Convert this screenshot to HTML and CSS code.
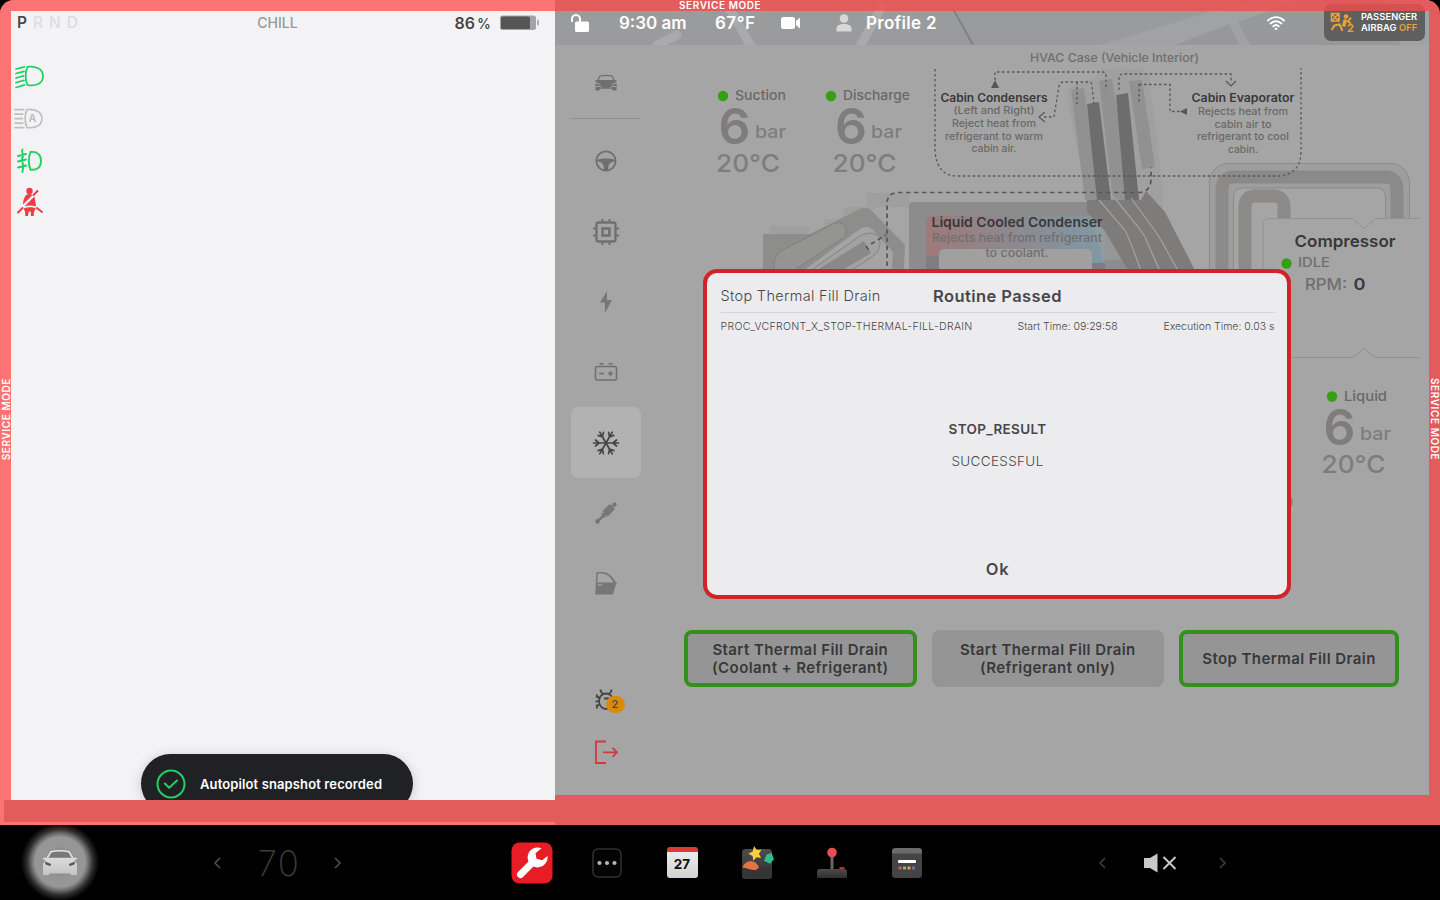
FILE: index.html
```
<!DOCTYPE html>
<html lang="en">
<head>
    <meta charset="UTF-8">
    <meta name="viewport" content="width=device-width, initial-scale=1.0">
    <title>Service Mode</title>
    <link rel="stylesheet" href="styles.css">
</head>
<body>
    <div class="screen">
        <!-- driver side -->
        <section class="drive">
            <div class="drive-panel">
                <header class="drive-top">
                    <div class="gears"><span class="on">P</span><span>R</span><span>N</span><span>D</span></div>
                    <div class="mode">CHILL</div>
                    <div class="charge">
                        <span class="charge-num">86<small>%</small></span>
                        <svg width="42" height="18" viewBox="0 0 42 18">
                            <rect x="1" y="1.500" width="36" height="14.500" rx="2.500" fill="#a3a3a5"/>
                            <rect x="2" y="2.500" width="29" height="12.500" rx="1.500" fill="#565657"/>
                            <rect x="38" y="5.500" width="2" height="6" rx="1" fill="#b0b0b2"/>
                        </svg>
                    </div>
                </header>
                <div class="lights">
                    <svg width="34" height="42" viewBox="0 0 34 42" fill="none" stroke="#1fd163" stroke-width="1.800" stroke-linecap="round">
                        <path d="M14.500 11.800c8-1 15.500 1.700 15.500 9.500S22.500 31.200 14.500 30.200c-2.500-5-2.500-13.500 0-18.400z"/>
                        <path d="M3 14l8.500-2.200M3 18.500l8-2.200M3 23l7.500-2.200M3 27.500l8-2.200M3 32.500l8.500-2.600"/>
                    </svg>
                    <svg width="34" height="42" viewBox="0 0 34 42" fill="none" stroke="#bfbfc1" stroke-width="1.700" stroke-linecap="round">
                        <path d="M14 12.500c7-1 15 1.700 15 9.200S21 31.300 14 30.600c-2.500-5-2.500-13.100 0-18.100z"/>
                        <path d="M2 12.600h8.800M2 17.100h7.800M2 21.600h7.500M2 26.100h7.800M2 30.600h8.800"/>
                        <text x="15.500" y="25.300" class="auto-a">A</text>
                    </svg>
                    <svg width="34" height="42" viewBox="0 0 34 42" fill="none" stroke="#1fd163" stroke-width="1.900" stroke-linecap="round">
                        <path d="M17.500 13c7-.8 10.500 2.800 10.500 9s-4 9.300-10.500 8.700c-2-5-2-12.500 0-17.700z"/>
                        <path d="M5 17l8-2M5 22.500l8-2M5 28.500l8-2M9.500 10.500c-2 3 1.500 4 .5 7s-2.500 3-.5 6 0 6 0 9.500"/>
                    </svg>
                    <svg width="34" height="42" viewBox="0 0 34 42" fill="#ee3c43">
                        <circle cx="16.500" cy="10" r="3.200"/>
                        <path d="M13 14.200c2-1.600 5-1.200 6.500-.200L10 23.500c0-3.500.8-7 3-9.300z"/>
                        <path d="M21.500 15.500l1.600 10c-3.500-1.200-8-1.200-11.500-.2z"/>
                        <path d="M10.500 27.500c4-1.600 9-1.600 12.500 0l-2 3-.3 4.500H18l-.3-4.500h-2l-.8 4.500h-2.600l-.3-4.500z"/>
                        <path d="M24.500 10l-4 4M24 27l5 4M9.500 27l-4.500 4.500" stroke="#ee3c43" stroke-width="2" stroke-linecap="round"/>
                    </svg>
                </div>
                <div class="toast">
                    <svg width="30" height="30" viewBox="0 0 30 30" fill="none" stroke="#23cf66" stroke-width="2" stroke-linecap="round" stroke-linejoin="round">
                        <circle cx="15" cy="15" r="13.500"/>
                        <path d="M8.800 14.500l4.400 4.300 7.800-7.300"/>
                    </svg>
                    <span>Autopilot snapshot recorded</span>
                </div>
            </div>
            <div class="drive-foot"></div>
        </section>

        <!-- center display -->
        <section class="service">
            <header class="status">
                <svg class="map" width="874" height="45" viewBox="555 0 874 45">
                    <path fill="#a1a2a3" d="M1100 45L1250 0h190v45z"/>
                    <path fill="#97989a" d="M1175 45l54-21 10 21zM1238 22l60-22h90l12 45h-150z"/>
                    <path d="M657 45l20-10M728 6l24 42M882 6l-24 44" stroke="#a8aaab" stroke-width="9" stroke-linecap="round"/>
                    <path d="M952 7l21 38" stroke="#818284" stroke-width="2"/>
                </svg>
                <svg class="lock" width="20" height="20" viewBox="0 0 20 20">
                    <path d="M2 9V6a4 4 0 0 1 8 0v5" fill="none" stroke="#fff" stroke-width="2"/>
                    <rect x="5" y="8.500" width="14" height="10.500" rx="1.500" fill="#fff"/>
                </svg>
                <span class="time">9:30 am</span>
                <span class="temp">67°F</span>
                <svg class="cam" width="22" height="14" viewBox="0 0 22 14" fill="#fff"><rect x="1" y="1" width="14" height="12" rx="2.500"/><path d="M16 5l4-3.500v11L16 9z"/></svg>
                <svg class="person" width="16" height="18" viewBox="0 0 16 18" fill="#d8d8d9"><circle cx="8" cy="4.500" r="4.300"/><path d="M.5 17.500v-3c0-3 3-4.500 7.500-4.500s7.500 1.500 7.500 4.500v3z"/></svg>
                <span class="profile">Profile 2</span>
                <svg class="wifi" width="20" height="16" viewBox="0 0 20 16" fill="none" stroke="#fff" stroke-width="1.800" stroke-linecap="round">
                    <path d="M2 5.500c4.500-4.500 11.500-4.500 16 0M4.600 8.500c3-3 7.800-3 10.800 0M7.200 11.300c1.600-1.500 4-1.500 5.600 0"/><circle cx="10" cy="13.800" r=".9" fill="#fff" stroke-width="1"/>
                </svg>
                <div class="airbag">
                    <svg width="25" height="24" viewBox="0 0 25 24" fill="none" stroke="#f0a136" stroke-width="1.500">
                        <path d="M1.500 2.500h7.500v7.500H1.500zM1.500 2.500L9 10M9 2.500L1.500 10"/>
                        <circle cx="16" cy="5.500" r="2.300" fill="#f0a136" stroke="none"/>
                        <path d="M15.500 8.500l-2 7" stroke-width="3.500"/>
                        <path d="M21 6.500l-3 4 3 2M1.500 19l3-4.500 5-1.200 3 6.500" stroke-width="2"/>
                        <text x="17" y="21" class="seat-no">2</text>
                    </svg>
                    <p>PASSENGER<br>AIRBAG <b>OFF</b></p>
                </div>
            </header>

            <div class="work">
                <nav class="side">
                    <a class="side-item"><svg width="24" height="18" viewBox="0 0 24 18" fill="#6f6f70"><path d="M5.500 1.500Q12 .2 18.500 1.500L20.600 6l2.200.3-.3 1.200-1.500.2 1.700 2-.2 6.800h-3.600l-1-1.800H6.100l-1 1.800H1.500l-.2-6.800 1.700-2-1.500-.2-.3-1.200L3.400 6zM6.300 2.600L4.800 6h14.400l-1.500-3.400Q12 1.600 6.300 2.600z" fill-rule="evenodd"/><path d="M1.500 9l5 1.500M22.500 9l-5 1.500M1.500 12.500h5l1.500 1.800M22.500 12.500h-5L16 14.300" stroke="#a5a5a5" stroke-width="1" fill="none"/></svg></a>
                    <hr>
                    <a class="side-item"><svg width="24" height="24" viewBox="0 0 24 24" fill="#6f6f70"><circle cx="12" cy="12" r="9.600" fill="none" stroke="#6f6f70" stroke-width="1.800"/><path d="M3 11c4-2 14-2 18 0l-.5 1.500c-3.500 0-5.500 2.500-6 4L14 21h-4l-.5-4.500c-.5-1.500-2.500-4-6-4z"/></svg></a>
                    <a class="side-item"><svg width="28" height="28" viewBox="0 0 28 28" fill="none" stroke="#6f6f70" stroke-width="2"><rect x="4.500" y="4.500" width="19" height="19" rx="2" stroke-width="2.300"/><rect x="10.500" y="10.500" width="7" height="7" stroke-width="2.500"/><path d="M10.500 1v3M17.500 1v3M10.500 24v3M17.500 24v3M1 10.500h3M1 17.500h3M24 10.500h3M24 17.500h3"/></svg></a>
                    <a class="side-item"><svg width="14" height="24" viewBox="0 0 14 24" fill="#77777a"><path d="M8 1L1 12.500h4.800L6 23l7-13H8z"/></svg></a>
                    <a class="side-item"><svg width="24" height="20" viewBox="0 0 24 20" fill="none" stroke="#6f6f70" stroke-width="1.600"><rect x="1.500" y="4.500" width="21" height="13.500" rx="2"/><path d="M5.500 1.800h4M14.500 1.800h4M5 11.500h5M14 11.500h5M16.500 9v5"/></svg></a>
                    <a class="side-item active"><svg width="28" height="28" viewBox="0 0 28 28" fill="none" stroke="#454545" stroke-width="1.700" stroke-linecap="round"><g id="arm"><path d="M14 14h12.500M21 14l3.500-3M21 14l3.500 3"/></g><use href="#arm" transform="rotate(60 14 14)"/><use href="#arm" transform="rotate(120 14 14)"/><use href="#arm" transform="rotate(180 14 14)"/><use href="#arm" transform="rotate(240 14 14)"/><use href="#arm" transform="rotate(300 14 14)"/></svg></a>
                    <a class="side-item"><svg width="24" height="24" viewBox="0 0 24 24" fill="#77777a"><g transform="rotate(45 12 12)"><circle cx="12" cy="0" r="2.200"/><rect x="11" y="0" width="2" height="4"/><rect x="8.300" y="2.800" width="7.400" height="10.500" rx="1"/><rect x="9.300" y="14" width="5.400" height="2"/><rect x="10.700" y="13" width="2.600" height="11"/><circle cx="12" cy="24" r="2.300"/></g></svg></a>
                    <a class="side-item"><svg width="24" height="24" viewBox="0 0 24 24" fill="#77777a"><path d="M2.500 1h5c7 0 11 4.500 14 9.500l1.500 2-1.500 2-2.500 9H1.200zM4 2.500l-.7 9h16.200C17 7 13.500 2.500 7.500 2.500z" fill-rule="evenodd"/><path d="M4 14h4" stroke="#a5a5a5" stroke-width="1.300"/></svg></a>
                    <div class="side-foot">
                        <a class="side-item bug"><svg width="28" height="28" viewBox="0 0 28 28" fill="none" stroke="#454545" stroke-width="1.800"><path d="M14 7.500c-4 0-7 3-7 7.500s3 8 7 8 7-3.500 7-8-3-7.500-7-7.500z"/><path d="M8.500 3.500c0 2 1 3.500 3 4.500M19.500 3.500c0 2-1 3.500-3 4.500M7.500 11.500L4.800 11V8.300M7 15.300H3.500M7.500 19l-2.700.5v3M12 12.500h5"/></svg><span class="count">2</span></a>
                        <a class="side-item"><svg width="26" height="26" viewBox="0 0 26 26" fill="none" stroke="#cf3940" stroke-width="1.800"><path d="M13 2.500H3v21.500h10M10 13.300h14M19.500 8.800l4.500 4.500-4.500 4.500"/></svg></a>
                    </div>
                </nav>

                <main class="main">
                    <svg class="diagram" width="759" height="585" viewBox="670 45 759 585">
                        <!-- chiller -->
                        <g>
                            <path fill="#9f9f9f" d="M770 226h39v8h-39zM824 219h20v-12h23v-14h42v14h-30l-55 26z"/>
                            <path fill="#8d8d8c" d="M763 234h47l50-25q6-3 11 1l34 35-2 40H763z"/>
                            <path fill="#a4a4a4" d="M784 285l76-56q7-4 12 0l21 23-2 33z"/>
                            <path fill="#949493" stroke="#7c7b7a" stroke-width=".8" d="M774 285v-20q0-9 7-14l52-27c8-4 14 2 13 9q-1 5-6 7l-58 38z"/>
                            <path fill="#a2a2a2" stroke="#7c7b7a" stroke-width=".8" d="M790 285l70-49c12-6 20-2 20 8q-1 8-7 12l-44 29z"/>
                            <path fill="#8a8988" d="M796 283l68-42 7 12-50 30z"/>
                        </g>
                        <!-- liquid cooled condenser -->
                        <rect x="909" y="202" width="229" height="80" rx="4" fill="#8c8c8d"/>
                        <rect x="926" y="240" width="179" height="40" fill="#7e7e80"/>
                        <path fill="url(#heat)" d="M926 222q0-6 6-6h173v47h-13v-7H926z"/>
                        <path fill="#a0a0a1" d="M939 285v-30q0-6 6-6h141q6 0 6 6v30z"/>
                        <!-- cabin ducts -->
                        <path fill="#9c9c9c" d="M1067 96q0-12 10-12l18-6q4-12 14-9 8-3 20 1 16-5 20 8l14 112v70h-60l-16-60z" opacity=".6"/>
                        <path fill="#919191" d="M1071 90l13-2 16 112h-15zM1099 81l13-2 20 121h-19zM1129 81l13-1 13 87-13 2z"/>
                        <path fill="#6d6d6d" d="M1087 104l12-2 12 98h-14zM1116 95l12-2 11 107h-14z"/>
                        <path fill="#7d7c7b" d="M1087 200h54l5-9 19 21 37 72h-66l-31-53-18-19z"/>
                        <path fill="none" stroke="#a3a3a3" stroke-width="1.200" d="M1099 200l25 29q5 7 22 56M1113 196l26 32 6 9 21 48M1131 198l22 30 8 12 25 45"/>
                        <!-- compressor lines -->
                        <rect x="1209.500" y="163.500" width="200" height="130" rx="19" fill="#9e9e9e" stroke="#8b8b8a"/>
                        <path fill="none" stroke="#8c8a88" stroke-width="13" d="M1222 290V189q0-12 12-12h151q12 0 12 12v60"/>
                        <path fill="#a5a5a5" stroke="#8b8b8a" d="M1233.500 290v-93q0-9 9-9h134q9 0 9 9v60"/>
                        <path fill="none" stroke="#8c8a88" stroke-width="13" d="M1245 290v-83q0-11 11-11h17q11 0 11 11v40"/>
                        <path fill="#a5a5a6" stroke="#8e8e8e" d="M1420 218.500h-44.500l-11.500 10-11.500-10H1269q-6 0-6 6v133h90l11-9 11 9h45" stroke-width=".9"/>
                        <path stroke="#a5a5a6" d="M1420 217v142"/>
                        <circle cx="1284" cy="502" r="9" fill="#8b8585"/>
                        <!-- flow lines -->
                        <g fill="none" stroke="#5b5455" stroke-width="1.300" stroke-dasharray="2.500 2.500">
                            <path d="M935 69v82q2 25 22 25h322q22-2 22-25V68"/>
                            <path d="M995 80v-8h108q3 0 3 4v14M1044 117h10l5-31q1-4 4-4h26q3 0 3 4l2 18M1077 82v22M1119 90v-12q0-4 4-4h108v9M1139 84.500h31v27h11M1139 84v20"/>
                            <path d="M887 274v-70q0-11 11-11.500h240q12 0 13-12v-13M866 246l4 6M871 244l15-9" stroke-width="1.700" stroke-dasharray="4.500 3.500"/>
                        </g>
                        <path d="M1045 112l-6 5 6 5M1226 81l5 5 5-5" fill="none" stroke="#5b5455" stroke-width="1.200"/>
                        <path d="M991 88l4-8 4 8zM1187 108v7l-7-3.500z" fill="#5b5455"/>

                        <g class="lbl" text-anchor="middle">
                            <text x="1114.500" y="61.500" class="muted" font-size="12" textLength="169" lengthAdjust="spacingAndGlyphs">HVAC Case (Vehicle Interior)</text>
                            <text x="994" y="101.500" class="strong" font-size="11.500" textLength="107" lengthAdjust="spacingAndGlyphs">Cabin Condensers</text>
                            <text x="994" y="114" font-size="10" textLength="81" lengthAdjust="spacingAndGlyphs">(Left and Right)</text>
                            <text x="994" y="127" font-size="10" textLength="84" lengthAdjust="spacingAndGlyphs">Reject heat from</text>
                            <text x="994" y="139.500" font-size="10" textLength="98" lengthAdjust="spacingAndGlyphs">refrigerant to warm</text>
                            <text x="994" y="152" font-size="10" textLength="45" lengthAdjust="spacingAndGlyphs">cabin air.</text>
                            <text x="1243" y="102" class="strong" font-size="11.500" textLength="103" lengthAdjust="spacingAndGlyphs">Cabin Evaporator</text>
                            <text x="1243" y="115" font-size="10" textLength="90" lengthAdjust="spacingAndGlyphs">Rejects heat from</text>
                            <text x="1243" y="127.500" font-size="10" textLength="57" lengthAdjust="spacingAndGlyphs">cabin air to</text>
                            <text x="1243" y="140" font-size="10" textLength="92" lengthAdjust="spacingAndGlyphs">refrigerant to cool</text>
                            <text x="1243" y="153" font-size="10" textLength="30" lengthAdjust="spacingAndGlyphs">cabin.</text>
                            <text x="1017" y="227" class="strong" font-size="13.500" textLength="171" lengthAdjust="spacingAndGlyphs">Liquid Cooled Condenser</text>
                            <text x="1017" y="242" class="muted" font-size="12" textLength="170" lengthAdjust="spacingAndGlyphs">Rejects heat from refrigerant</text>
                            <text x="1017" y="256.500" class="muted" font-size="12" textLength="63" lengthAdjust="spacingAndGlyphs">to coolant.</text>
                            <text x="1345" y="247" class="strong" font-size="16.500" textLength="101" lengthAdjust="spacingAndGlyphs">Compressor</text>
                        </g>
                        <g class="lbl">
                            <text x="1298" y="267" class="muted" font-size="13.500" textLength="32" lengthAdjust="spacingAndGlyphs">IDLE</text>
                            <text x="1305" y="290" class="muted" font-size="16" textLength="42" lengthAdjust="spacingAndGlyphs">RPM:</text>
                            <text x="1353.500" y="290" class="strong" font-size="16" textLength="12" lengthAdjust="spacingAndGlyphs">0</text>
                        </g>
                        <g fill="#35a014">
                            <circle cx="1286.500" cy="263.500" r="5.200"/>
                            <circle cx="723" cy="96" r="5.200"/>
                            <circle cx="831" cy="96" r="5.200"/>
                            <circle cx="1332" cy="396.500" r="5.200"/>
                        </g>
                        <g class="lbl gauge">
                            <text x="735" y="100" class="name" textLength="51" lengthAdjust="spacingAndGlyphs">Suction</text>
                            <text x="718.500" y="144" class="big" textLength="32" lengthAdjust="spacingAndGlyphs">6</text>
                            <text x="755" y="138" class="unit" textLength="31" lengthAdjust="spacingAndGlyphs">bar</text>
                            <text x="716" y="171.500" class="deg" textLength="64" lengthAdjust="spacingAndGlyphs">20°C</text>

                            <text x="843" y="100" class="name" textLength="67" lengthAdjust="spacingAndGlyphs">Discharge</text>
                            <text x="835" y="144" class="big" textLength="32" lengthAdjust="spacingAndGlyphs">6</text>
                            <text x="871" y="138" class="unit" textLength="31" lengthAdjust="spacingAndGlyphs">bar</text>
                            <text x="832.500" y="171.500" class="deg" textLength="64" lengthAdjust="spacingAndGlyphs">20°C</text>

                            <text x="1344" y="400.500" class="name" textLength="43" lengthAdjust="spacingAndGlyphs">Liquid</text>
                            <text x="1323.500" y="445" class="big" textLength="32" lengthAdjust="spacingAndGlyphs">6</text>
                            <text x="1360" y="439.500" class="unit" textLength="31" lengthAdjust="spacingAndGlyphs">bar</text>
                            <text x="1321.500" y="473" class="deg" textLength="64" lengthAdjust="spacingAndGlyphs">20°C</text>
                        </g>
                        <defs>
                            <linearGradient id="heat">
                                <stop offset="0" stop-color="#a07979"/>
                                <stop offset=".5" stop-color="#8c8a90"/>
                                <stop offset="1" stop-color="#8099a6"/>
                            </linearGradient>
                        </defs>
                    </svg>

                    <div class="actions">
                        <button class="btn done">Start Thermal Fill Drain<br>(Coolant + Refrigerant)</button>
                        <button class="btn">Start Thermal Fill Drain<br>(Refrigerant only)</button>
                        <button class="btn done narrow">Stop Thermal Fill Drain</button>
                    </div>

                    <div class="modal">
                        <div class="modal-head">
                            <span class="modal-name">Stop Thermal Fill Drain</span>
                            <h2>Routine Passed</h2>
                        </div>
                        <div class="modal-info">
                            <span class="proc">PROC_VCFRONT_X_STOP-THERMAL-FILL-DRAIN</span>
                            <span class="start">Start Time: 09:29:58</span>
                            <span class="exec">Execution Time: 0.03 s</span>
                        </div>
                        <div class="modal-body">
                            <h3>STOP_RESULT</h3>
                            <p>SUCCESSFUL</p>
                        </div>
                        <button class="ok">Ok</button>
                    </div>
                </main>
            </div>
        </section>

        <span class="tag tag-top">SERVICE MODE</span>
        <span class="tag tag-left">SERVICE MODE</span>
        <span class="tag tag-right">SERVICE MODE</span>
    </div>

    <footer class="dock">
        <div class="dock-car">
            <svg width="38" height="30" viewBox="0 0 38 30">
                <defs><linearGradient id="body" x2="0" y2="1"><stop stop-color="#e4e4e4"/><stop offset="1" stop-color="#c4c4c4"/></linearGradient></defs>
                <path fill="url(#body)" d="M9.500 3Q19 1 28.500 3l4 6.500 3.500.5-.3 1.500-2.200.5 2.500 4v11h-6V25.500H8v1.500H2V16l2.500-4-2.200-.5L2 10l3.500-.5z"/>
                <path fill="#777" d="M10.500 4.500Q19 2.300 27.500 4.500l3 5.300h-23z"/>
                <path fill="#555" d="M4 13.500l6 2.500-.5 2-5-1.500zM34 13.500L28 16l.5 2 5-1.500z"/>
            </svg>
        </div>
        <div class="stepper">
            <svg width="12" height="16" viewBox="0 0 12 16"><path d="M9 3L4 8l5 5"/></svg>
            <span class="set">70</span>
            <svg width="12" height="16" viewBox="0 0 12 16"><path d="M3 3l5 5-5 5"/></svg>
        </div>
        <div class="apps">
            <a class="app"><svg width="42" height="42" viewBox="0 0 42 42"><rect x=".5" y=".5" width="41" height="41" rx="8" fill="#e81c24"/><path d="M9.500 32.500L22 20" stroke="#fff" stroke-width="7" stroke-linecap="round"/><path fill="#fff" d="M30.500 6.200a10 10 0 1 0 6 7.800l-5.300 4.200-5.700-1.500-1-5.500z"/></svg></a>
            <a class="app"><svg width="30" height="30" viewBox="0 0 30 30"><rect x="1" y="1" width="28" height="28" rx="5" fill="#030303" stroke="#303030" stroke-width="1.500"/><g fill="#b5b5b5"><circle cx="7.500" cy="15" r="2.100"/><circle cx="15" cy="15" r="2.100"/><circle cx="22.500" cy="15" r="2.100"/></g></svg></a>
            <a class="app"><div class="cal">27</div></a>
            <a class="app"><svg width="34" height="34" viewBox="0 0 34 34">
                <defs><linearGradient id="dark" x2="0" y2="1"><stop stop-color="#4c4c4c"/><stop offset="1" stop-color="#303030"/></linearGradient></defs>
                <rect x="2" y="3" width="30" height="30" rx="3.500" fill="url(#dark)"/>
                <path fill="#e27342" d="M2.500 22a8.300 8.300 0 1 1 16.500 3z"/>
                <path fill="#353535" d="M2 21.500q5 0 8 2.500t8-1.500 14-1v8q0 3.500-3.500 3.500h-23Q2 33 2 29.500z"/>
                <path fill="#f8cf3c" d="M14 0l2.800 4 4.700-.3-2.600 4.100 2.200 4.200-4.600-.8-3.200 3.600-.7-4.800L8.300 7.800l4.400-2.200z"/>
                <path fill="#2fbd90" d="M26.500 8.700l5-2L34 13.200l-4 4.500-6-3z"/>
            </svg></a>
            <a class="app"><svg width="32" height="32" viewBox="0 0 32 32"><path d="M16 8v16" stroke="#666" stroke-width="3"/><circle cx="16" cy="5.500" r="4.800" fill="#e34f4f"/><rect x="23.500" y="20" width="5" height="2.500" fill="#b5312f"/><path fill="url(#dark)" d="M1 31v-6q0-3 3-3h24q3 0 3 3v6z"/></svg></a>
            <a class="app"><svg width="32" height="32" viewBox="0 0 32 32"><rect x="1" y="1" width="30" height="30" rx="3.500" fill="#444"/><path fill="#6b6b6b" d="M1 6.500v-2Q1 1 4.500 1h23Q31 1 31 4.500v2z"/><rect x="7" y="13" width="18" height="3" rx="1" fill="#fff"/><path fill="#d65a52" d="M7.500 19.500h3v3h-3z"/><path fill="#86b59c" d="M12 19.500h3v3h-3z"/><path fill="#e0a34f" d="M16.500 19.500h3v3h-3z"/><path fill="#6678a0" d="M21 19.500h3v3h-3z"/></svg></a>
        </div>
        <div class="stepper volume">
            <svg width="12" height="16" viewBox="0 0 12 16"><path d="M9 3L4 8l5 5"/></svg>
            <svg class="mute" width="36" height="22" viewBox="0 0 36 22"><path fill="#c9c9c9" stroke="none" d="M0 6h6l7.500-4.500v19L6 16H0z"/><path d="M19.500 5l12 12M31.500 5l-12 12"/></svg>
            <svg width="12" height="16" viewBox="0 0 12 16"><path d="M3 3l5 5-5 5"/></svg>
        </div>
    </footer>
</body>
</html>
```

FILE: styles.css
```
* {
    box-sizing: border-box;
    margin: 0;
    padding: 0;
}
body {
    width: 1440px;
    height: 900px;
    overflow: hidden;
    background-color: #000;
    font-family: Inter, "Liberation Sans", sans-serif;
    color: #454545;
}
svg {
    display: block;
    flex: none;
}
button {
    font-family: inherit;
    border: none;
    background: none;
    color: inherit;
}

.screen {
    position: relative;
    display: flex;
    height: 825px;
    border-radius: 14px 14px 0 0;
    overflow: hidden;
    background-color: #e35c5c;
}

/* driver side */
.drive {
    width: 555px;
    padding: 11px 0 3px 11px;
    background-color: #fc7374;
    display: flex;
    flex-direction: column;
}
.drive-panel {
    position: relative;
    height: 789px;
    overflow: hidden;
    background-color: #f3f3f6;
}
.drive-foot {
    flex: 1;
    margin-left: -7px;
    background-color: #e35c5c;
}
.drive-top {
    display: grid;
    grid-template-columns: 1fr auto 1fr;
    align-items: center;
    height: 24px;
    padding: 0 14px 0 6px;
}
.gears {
    display: flex;
    gap: 6px;
    font-size: 15.5px;
    font-weight: 500;
    line-height: 24px;
    color: #dcdcde;
}
.gears .on {
    color: #4a4a4b;
    font-weight: 600;
}
.mode {
    font-size: 14px;
    font-weight: 500;
    padding: 0 3px 2px 0;
    color: #98989a;
}
.charge {
    display: flex;
    justify-content: flex-end;
    align-items: center;
    gap: 8px;
}
.charge-num {
    font-size: 16px;
    font-weight: 600;
}
.charge-num small {
    font-size: 14px;
    font-weight: 500;
    margin-left: 2px;
}
.lights {
    padding: 20px 0 0 2px;
}
.auto-a {
    font-size: 10.5px;
    font-weight: 700;
    fill: #bfbfc1;
    stroke: none;
}
.toast {
    position: absolute;
    left: 130px;
    bottom: -13px;
    width: 272px;
    height: 59px;
    border-radius: 30px;
    background-color: #1f2124;
    box-shadow: 0 2px 12px rgba(0, 0, 0, .18);
    display: flex;
    align-items: center;
    gap: 14px;
    padding-left: 15px;
    color: #fff;
    font-size: 13px;
    font-weight: 600;
    letter-spacing: .12px;
}

/* center display */
.service {
    width: 874px;
    height: 795px;
    background-color: #a5a5a5;
    display: flex;
    flex-direction: column;
}
.status {
    position: relative;
    height: 45px;
    background-color: #9a9b9d;
    display: flex;
    align-items: center;
    padding-left: 15px;
    color: #fff;
    font-size: 17px;
    font-weight: 600;
}
.status > * {
    position: relative;
}
.status .map {
    position: absolute;
    left: 0;
    top: 0;
}
/* red frame lies over the status bar */
.status::after {
    content: "";
    position: absolute;
    left: 0;
    right: 0;
    top: 0;
    height: 11px;
    background-color: rgba(245, 76, 76, .8);
}
.time {
    width: 68px;
    margin-left: 29px;
}
.temp {
    width: 42px;
    margin-left: 28px;
    letter-spacing: .5px;
}
.cam {
    margin-left: 23px;
}
.person {
    margin-left: 34px;
}
.profile {
    width: 72px;
    margin-left: 14px;
    white-space: nowrap;
    letter-spacing: .3px;
}
.wifi {
    margin-left: 328px;
}
.airbag {
    display: flex;
    align-items: center;
    gap: 6px;
    width: 101px;
    height: 37px;
    margin-left: 38px;
    padding-left: 6px;
    border-radius: 7px;
    background-color: #5f5f60;
}
.airbag p {
    font-size: 9.3px;
    line-height: 11px;
    letter-spacing: .1px;
    padding-bottom: 1px;
    white-space: nowrap;
}
.airbag b {
    font-weight: 600;
    color: #f0a136;
}
.seat-no {
    font-size: 11px;
    font-weight: 700;
    fill: #f0a136;
    stroke: none;
}

.work {
    flex: 1;
    display: flex;
    min-height: 0;
}
.side {
    width: 115px;
    padding: 3px 0 17px 16px;
    display: flex;
    flex-direction: column;
}
.side hr {
    width: 69px;
    border: none;
    border-top: 1px solid #8f8f8f;
    margin-bottom: 7px;
}
.side-item {
    width: 69.500px;
    height: 70.3px;
    display: flex;
    justify-content: center;
    align-items: center;
    border-radius: 7px;
}
.side-item.active {
    background-color: #b2b2b2;
}
.side-foot {
    margin-top: auto;
}
.side-foot .side-item {
    height: 52px;
}
.bug {
    position: relative;
}
.count {
    position: absolute;
    left: 34.500px;
    top: 22px;
    width: 19px;
    height: 17px;
    border-radius: 9px;
    background-color: #d88a0b;
    font-size: 11px;
    font-weight: 500;
    line-height: 17px;
    text-align: center;
}

.main {
    position: relative;
    width: 759px;
}
.lbl {
    fill: #6a6868;
    font-weight: 500;
}
.lbl .muted {
    fill: #706e6e;
}
.lbl .strong {
    fill: #38383a;
    font-weight: 600;
}
.gauge .name {
    font-size: 13.5px;
}
.gauge .big {
    font-size: 49px;
    font-weight: 600;
    fill: #7f7d7b;
}
.gauge .unit {
    font-size: 17.500px;
    fill: #7f7d7c;
}
.gauge .deg {
    font-size: 24px;
    fill: #7f7d7b;
}

.actions {
    display: flex;
    gap: 15px;
    padding-left: 14px;
}
.btn {
    width: 232.500px;
    height: 57px;
    border-radius: 8px;
    background-color: #959595;
    color: #38383a;
    font-size: 15px;
    font-weight: 600;
    line-height: 18px;
    letter-spacing: .420px;
}
.btn.done {
    border: 4px solid #358f1c;
}
.btn.narrow {
    width: 220px;
}

.modal {
    position: absolute;
    left: 33px;
    top: 224px;
    width: 588px;
    height: 330px;
    border: 4px solid #d3232a;
    border-radius: 14px;
    background-color: #ececee;
    padding: 0 12.500px 0 13.5px;
    display: flex;
    flex-direction: column;
    color: #47474a;
}
.modal-head {
    display: grid;
    grid-template-columns: 1fr auto 1fr;
    align-items: center;
    height: 40px;
    padding-top: 6px;
    border-bottom: 1px solid #d5d5d7;
}
.modal-name {
    font-size: 14.500px;
    font-weight: 300;
    letter-spacing: .320px;
}
.modal-head h2 {
    font-size: 16.500px;
    font-weight: 600;
    letter-spacing: .420px;
}
.modal-info {
    display: grid;
    grid-template-columns: 297px 1fr auto;
    padding-top: 7px;
    font-size: 10.500px;
    font-weight: 300;
    line-height: 13px;
    white-space: nowrap;
}
.proc {
    letter-spacing: .320px;
}
.modal-body {
    flex: 1;
    text-align: center;
    padding-top: 87px;
}
.modal-body h3 {
    font-size: 13.500px;
    font-weight: 600;
    line-height: 18px;
    letter-spacing: .35px;
}
.modal-body p {
    margin-top: 14px;
    font-size: 13.500px;
    font-weight: 300;
    line-height: 18px;
    letter-spacing: .35px;
}
.ok {
    height: 52px;
    align-self: center;
    padding: 0 20px;
    font-size: 16.500px;
    font-weight: 600;
    letter-spacing: .6px;
}

/* frame labels */
.tag {
    position: absolute;
    color: #fff;
    font-size: 10px;
    font-weight: 600;
    line-height: 11px;
    letter-spacing: .6px;
    white-space: nowrap;
}
.tag-top {
    left: 679px;
    top: 0;
}
.tag-left {
    left: 1px;
    top: 378px;
    writing-mode: vertical-rl;
    transform: rotate(180deg);
}
.tag-right {
    right: 0;
    top: 378px;
    writing-mode: vertical-rl;
}

/* bottom dock */
.dock {
    height: 75px;
    display: flex;
    align-items: center;
}
.dock-car {
    width: 120px;
    height: 75px;
    display: flex;
    justify-content: center;
    align-items: center;
    background: radial-gradient(circle closest-side at 60px 37px, #707070 0, #959595 16px, #979797 25px, #666 29px, #2e2e2e 33px, #000 39px);
}
.stepper {
    width: 133px;
    margin-left: 91px;
    display: flex;
    justify-content: space-between;
    align-items: center;
}
.stepper svg {
    fill: none;
    stroke: #4f4f4f;
    stroke-width: 1.600;
}
.set {
    font-size: 35px;
    font-weight: 200;
    letter-spacing: 1.500px;
    margin-right: -3px;
    color: #3c3c3c;
}
.apps {
    display: flex;
    margin-left: 150.500px;
}
.app {
    width: 75px;
    height: 75px;
    display: flex;
    justify-content: center;
    align-items: center;
}
.cal {
    width: 31px;
    height: 31px;
    border-radius: 3px;
    border-top: 5px solid #e03a36;
    background: linear-gradient(#ececec, #d2d2d2);
    color: #111;
    font-size: 13.500px;
    font-weight: 700;
    line-height: 24px;
    text-align: center;
}
.volume {
    margin-left: 151px;
}
.volume svg {
    stroke: #3c3c3c;
}
.stepper .mute {
    stroke: #c9c9c9;
    stroke-width: 2;
}
```
